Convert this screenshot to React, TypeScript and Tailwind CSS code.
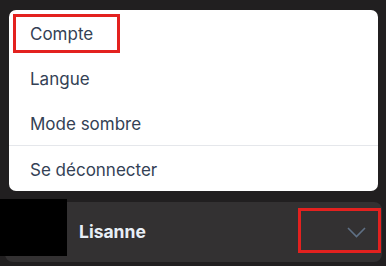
import React from "react";

const items = ["Compte", "Langue", "Mode sombre"];

const UserMenu = () => {
  return (
    <div
      className="relative w-[386px] h-[266px] overflow-hidden bg-[#211f20]"
      style={{ fontFamily: "Inter, 'Noto Sans', sans-serif" }}
    >
      <div className="relative ml-[9px] mt-[10px] w-[369px] h-[181px] bg-white rounded-[7px] flex flex-col">
        {items.map((label) => (
          <div key={label} className="h-[45px] flex items-center px-[21px] pt-[4px] text-[17px] text-[#334155]">
            {label}
          </div>
        ))}
        <div className="border-t border-[#e5e7eb] h-[46px] flex items-center px-[21px] pt-[4px] text-[17px] text-[#334155]">
          Se déconnecter
        </div>
        <div className="absolute left-[4px] top-[4px] w-[107px] h-[39px] border-[3px] border-[#e3211f]"></div>
      </div>

      <div className="relative ml-[5px] mt-[11px] w-[377px] h-[60px] bg-[#333132] rounded-lg flex items-center pl-[74px] pr-[16px]">
        <div className="absolute -left-[5px] -top-[3px] w-[67px] h-[57px] bg-black"></div>
        <span className="text-[17.5px] font-bold text-[#e8eef6]">Lisanne</span>
        <svg className="ml-auto" width="19" height="11" viewBox="0 0 19 11" fill="none">
          <path d="M1 1l8.5 8.5L18 1" stroke="#5f7085" strokeWidth="1.6" />
        </svg>
        <div className="absolute right-[1px] top-[6px] w-[83px] h-[45px] border-[3px] border-[#e3211f]"></div>
      </div>
    </div>
  );
};

export default function App() {
  return <UserMenu />;
}
